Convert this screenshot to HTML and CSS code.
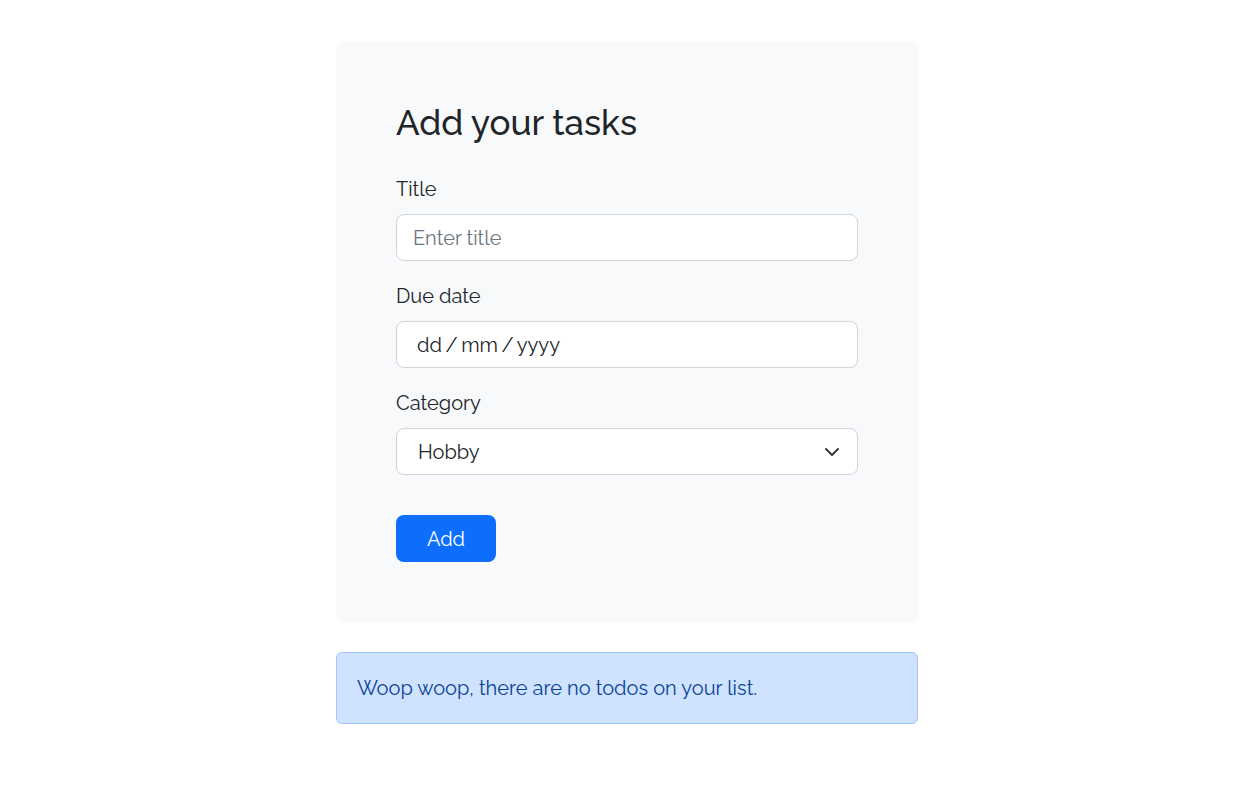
FILE: index.html
```html
<!DOCTYPE html>
<html lang="en">
<head>
<meta charset="utf-8">
<title>Todos</title>
<link rel="stylesheet" href="styles.css">
</head>
<body>
<main class="page">
  <section class="card">
    <h2 class="card-title">Add your tasks</h2>
    <form class="task-form">
      <div class="field">
        <label class="field-label" for="title">Title</label>
        <input class="control" id="title" type="text" placeholder="Enter title">
      </div>
      <div class="field">
        <label class="field-label" for="due">Due date</label>
        <div class="control control-date" id="due">dd / mm / yyyy</div>
      </div>
      <div class="field">
        <label class="field-label" for="cat">Category</label>
        <div class="control control-select" id="cat">
          <span class="select-value">Hobby</span>
          <svg class="chevron" width="16" height="16" viewBox="0 0 16 16" aria-hidden="true">
            <path d="M2 5l6 6 6-6" fill="none" stroke="#343a40" stroke-width="2" stroke-linecap="round" stroke-linejoin="round"/>
          </svg>
        </div>
      </div>
      <button class="btn-add" type="button">Add</button>
    </form>
  </section>
  <div class="alert">Woop woop, there are no todos on your list.</div>
</main>
</body>
</html>
```
FILE: styles.css
```css
* { box-sizing: border-box; }
html, body { margin: 0; padding: 0; background: #fff; }
body {
  font-family: "Raleway", "Lato", "Open Sans", sans-serif;
  color: #212529;
  font-size: 20px;
  line-height: 1.5;
}
.page {
  width: 582px;
  margin: 42px 0 0 336px;
  display: flex;
  flex-direction: column;
  gap: 30px;
}
.card {
  background: #f8f9fa;
  border-radius: 6px;
  padding: 60px;
}
.card-title {
  margin: 0 0 30px;
  font-size: 35px;
  font-weight: 500;
  line-height: 42px;
}
.task-form { display: flex; flex-direction: column; }
.field { display: flex; flex-direction: column; margin-bottom: 20px; }
.field:last-of-type { margin-bottom: 40px; }
.field-label {
  font-size: 20px;
  line-height: 30px;
  margin-bottom: 10px;
}
.control {
  height: 47px;
  border: 1px solid #ced4da;
  border-radius: 8px;
  background: #fff;
  padding: 0 16px;
  font-family: inherit;
  font-size: 20px;
  color: #212529;
  display: flex;
  align-items: center;
  outline: none;
  width: 100%;
}
.control::placeholder { color: #6c757d; }
.control-date { padding-left: 20px; word-spacing: -1.5px; }
.control-select { padding: 0 17px 0 21px; justify-content: space-between; }
.chevron { flex: none; }
.btn-add {
  align-self: flex-start;
  width: 100px;
  height: 47px;
  border: 0;
  border-radius: 8px;
  background: #0d6efd;
  color: #fff;
  font-family: inherit;
  font-size: 20px;
}
.alert {
  background: #cfe2ff;
  border: 1px solid #9ec5fe;
  border-radius: 6px;
  color: #084298;
  padding: 20px;
  font-size: 20px;
  line-height: 30px;
}
```
